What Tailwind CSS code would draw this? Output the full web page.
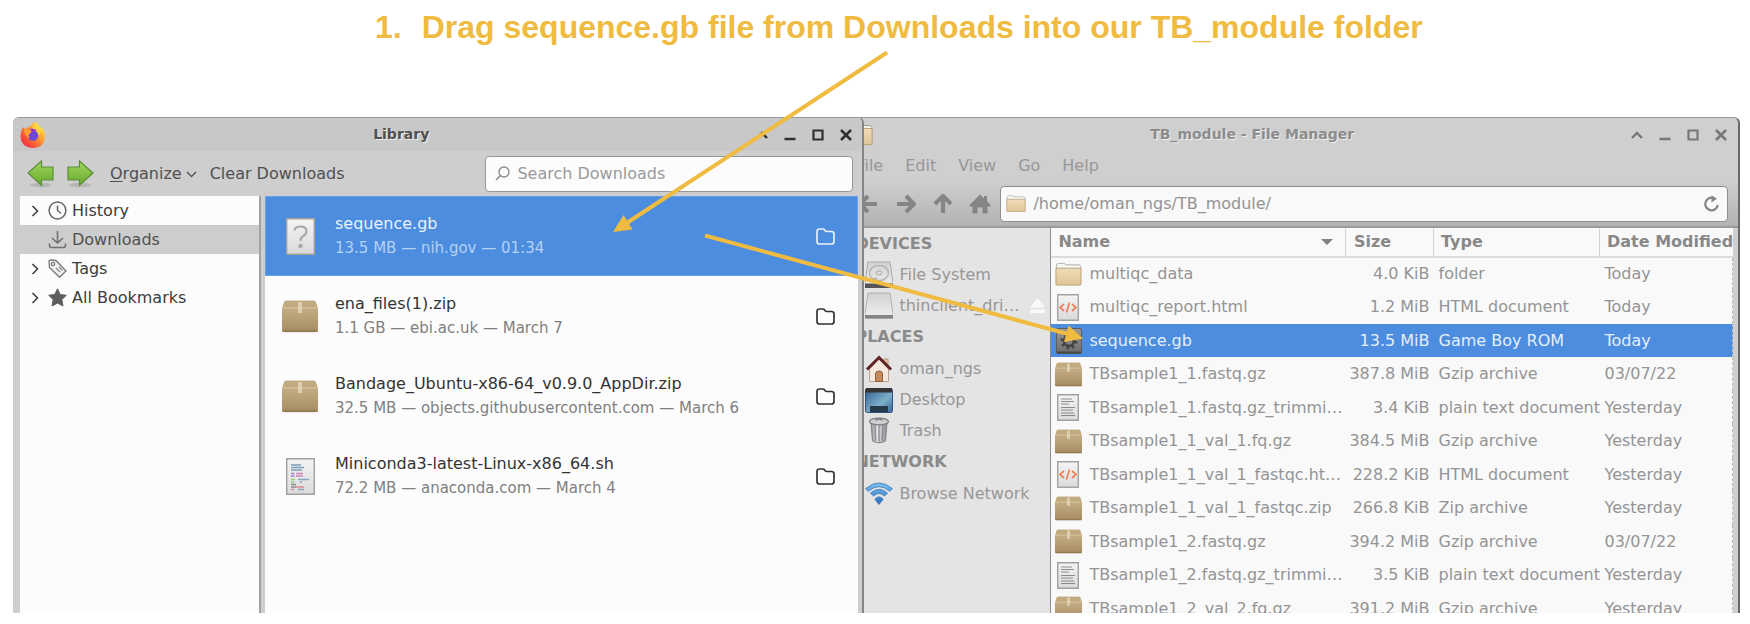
<!DOCTYPE html>
<html lang="en">
<head>
<meta charset="utf-8">
<title>Move sequence.gb into TB_module</title>
<script src="https://cdn.jsdelivr.net/npm/@tailwindcss/browser@4"></script>
</head>
<body class="bg-white">
<svg class="absolute size-0" aria-hidden="true">
  <defs>
    <linearGradient id="gBox" x1="0" y1="0" x2="0" y2="1"><stop offset="0" stop-color="#cdb78f"/><stop offset="1" stop-color="#a68c62"/></linearGradient>
    <linearGradient id="gGreen" x1="0" y1="0" x2="0" y2="1"><stop offset="0" stop-color="#a5d860"/><stop offset="1" stop-color="#62a82c"/></linearGradient>
    <linearGradient id="gPage" x1="0" y1="0" x2="0" y2="1"><stop offset="0" stop-color="#f4f4f4"/><stop offset="1" stop-color="#dadada"/></linearGradient>
    <linearGradient id="gFolder" x1="0" y1="0" x2="0" y2="1"><stop offset="0" stop-color="#efdcb8"/><stop offset="1" stop-color="#dfc595"/></linearGradient>
    <linearGradient id="gFox" x1="1" y1="0" x2="0" y2="1"><stop offset="0" stop-color="#fff04a"/><stop offset=".4" stop-color="#ffa030"/><stop offset=".75" stop-color="#f8483c"/><stop offset="1" stop-color="#e0205c"/></linearGradient>
    <linearGradient id="gDesk" x1="0" y1="0" x2="1" y2="1"><stop offset="0" stop-color="#2f5a92"/><stop offset=".6" stop-color="#7db0c8"/><stop offset="1" stop-color="#34659c"/></linearGradient>
    <linearGradient id="gDrive" x1="0" y1="0" x2="0" y2="1"><stop offset="0" stop-color="#d2d2d2"/><stop offset="1" stop-color="#efefef"/></linearGradient>
    <linearGradient id="gTrash"><stop offset="0" stop-color="#8f8f94"/><stop offset=".4" stop-color="#e6e6ea"/><stop offset="1" stop-color="#8b8b90"/></linearGradient>
    <linearGradient id="gWifi" x1="0" y1="0" x2="0" y2="1"><stop offset="0" stop-color="#7cc3f2"/><stop offset="1" stop-color="#2f6dc0"/></linearGradient>
    <linearGradient id="gRom" x1="0" y1="0" x2="0" y2="1"><stop offset="0" stop-color="#9a9a9a"/><stop offset="1" stop-color="#6c6c6c"/></linearGradient>
  </defs>
  <symbol id="box" viewBox="0 0 36 33">
    <path d="M1 31.500h34v1H1z" fill="#bbb" opacity=".6"/>
    <path d="M4 .5h28q1.500 0 2 1.500l2 7v21q0 2-1.500 2h-33Q0 32 0 30V9l2-7Q2.500.5 4 .5z" fill="url(#gBox)"/>
    <path d="M4 1h28q1 0 1.500 1l2 6.500H.5L2.500 2Q3 1 4 1z" fill="#c2aa80"/>
    <path d="M.5 8h35" stroke="#d9c7a3" stroke-width="1.200"/>
    <path d="M.5 31h35" stroke="#94794f" stroke-width="1.500"/>
    <path d="M16 2h4v11h-4z" fill="#e6d9bd" opacity=".75"/>
  </symbol>
  <symbol id="folder" viewBox="0 0 28 24">
    <path d="M1.500 22V3.500Q1.500 1 4 1h5q1.500 0 2 1.500h13.500q2 0 2 2V22z" fill="#f7f7f5" stroke="#b0aea8"/>
    <path d="M1 6h26v16.500q0 1-1 1H2q-1 0-1-1z" fill="url(#gFolder)" stroke="#b9a27a"/>
  </symbol>
  <symbol id="html" viewBox="0 0 22 27">
    <path d="M.7.700h20.600v25.600H.7z" fill="url(#gPage)" stroke="#a3a3a3" stroke-width="1.400"/>
    <path d="M7 10l-4 3.500L7 17M15 10l4 3.500-4 3.500M12.500 8.500l-3 10" fill="none" stroke="#ee8159" stroke-width="1.700"/>
  </symbol>
  <symbol id="txt" viewBox="0 0 22 27">
    <path d="M.7.700h20.600v25.600H.7z" fill="url(#gPage)" stroke="#a0a0a0" stroke-width="1.400"/>
    <path d="M4 5h11M4 7.500h13M4 10h8M4 13.500h14M4 16h12M4 19h13M4 21.500h14" stroke="#8c8c8c" stroke-width="1.200"/>
  </symbol>
  <symbol id="rom" viewBox="0 0 26 26">
    <rect x=".5" y=".5" width="25" height="25" rx="1.500" fill="url(#gRom)" stroke="#5d5d5d"/>
    <circle cx="13" cy="13" r="5" fill="none" stroke="#474747" stroke-width="3"/>
    <circle cx="13" cy="13" r="7.300" fill="none" stroke="#474747" stroke-width="2.600" stroke-dasharray="2.500 3.230"/>
    <path d="M1 24.500h24" stroke="#484848" stroke-width="2"/>
  </symbol>
  <symbol id="dir" viewBox="0 0 19 17">
    <path d="M3.500 1h3.600q.8 0 1.300.7l.8 1.100q.5.700 1.300.7H15.500Q18 3.500 18 6v7.500Q18 16 15.500 16h-12Q1 16 1 13.500v-10Q1 1 3.500 1z" fill="none" stroke="currentColor" stroke-width="1.700"/>
  </symbol>
  <symbol id="up" viewBox="0 0 12 12"><path d="M1 9l5-5 5 5" fill="none" stroke="currentColor" stroke-width="2.400"/></symbol>
  <symbol id="min" viewBox="0 0 12 12"><path d="M.5 10h11" stroke="currentColor" stroke-width="2.400"/></symbol>
  <symbol id="max" viewBox="0 0 12 12"><path d="M1.500 1.500h9v9h-9z" fill="none" stroke="currentColor" stroke-width="2.200"/></symbol>
  <symbol id="close" viewBox="0 0 12 12"><path d="M1 1l10 10M11 1L1 11" stroke="currentColor" stroke-width="2.600"/></symbol>
  <symbol id="chev" viewBox="0 0 8 12"><path d="M1.500 1l5 5-5 5" fill="none" stroke="currentColor" stroke-width="1.500"/></symbol>
  <symbol id="gArrow" viewBox="0 0 27 28">
    <ellipse cx="14" cy="25" rx="11" ry="2.200" fill="#999" opacity=".45"/>
    <path d="M1 13L14.500 1v6h11.500v13H14.500v5.500z" fill="url(#gGreen)" stroke="#5a8f3a" stroke-width="1.200"/>
  </symbol>
  <symbol id="navArrow" viewBox="0 0 20 20"><path d="M1 10h17M10 2l8 8-8 8" fill="none" stroke="currentColor" stroke-width="4.200"/></symbol>
</svg>

<main class="relative flex h-screen flex-col overflow-hidden font-['DejaVu_Sans',sans-serif] text-base">
  <h1 class="flex h-[117px] shrink-0 gap-5 pt-[7px] pl-[375px] text-[32px] leading-10 font-bold whitespace-nowrap text-[#efbb40] font-['Liberation_Sans',Arial,sans-serif]">
    <span>1.</span><span>Drag sequence.gb file from Downloads into our TB_module folder</span>
  </h1>

  <div class="mr-[10px] mb-[11px] ml-[13px] flex min-h-0 flex-1">
    <!-- Library window -->
    <section aria-label="Library" class="z-10 flex w-[49.3%] shrink-0 flex-col overflow-hidden rounded-t-md border-t border-r-2 border-t-[#999] border-r-[#858585] bg-[#cecece] text-[#505050]">
      <header class="flex h-[33px] shrink-0 items-center bg-[#c8c8c8] pr-[10px] pl-[7px]">
        <svg class="size-[26px]" viewBox="0 0 26 26" aria-hidden="true">
          <path d="M3 5l2 2q2-2 5-2.500Q12 2 15 0q1.500 3 4 4.500 6.500 4 6 10Q24.500 25.500 13 26 1 25.500.5 14 .5 9 3 5z" fill="url(#gFox)"/>
          <path d="M16 0q2 3 5 5 4 4 4 9-1-4-4-5-1 6-8 6-4-1-4-4z" fill="#ffdc3f" opacity=".8"/>
          <circle cx="13" cy="13.500" r="5.200" fill="#6b48d8"/>
          <path d="M9 7q4-1.500 8 1-2 0-2.500 2-4-1-5 4Q7 11 9 7z" fill="#9a35c8"/>
          <path d="M4 8q3-2 7 0 1 3-2 4-1 2 1 4-5-1-6-8z" fill="#ff9e2f"/>
        </svg>
        <h2 class="flex-1 text-center text-[14px] font-bold [text-shadow:1px_1px_0_#eee]">Library</h2>
        <div class="flex gap-4 text-[#303030]">
          <button aria-label="Shade"><svg class="size-3"><use href="#up"/></svg></button>
          <button aria-label="Minimize"><svg class="size-3"><use href="#min"/></svg></button>
          <button aria-label="Maximize"><svg class="size-3"><use href="#max"/></svg></button>
          <button aria-label="Close"><svg class="size-3"><use href="#close"/></svg></button>
        </div>
      </header>

      <div class="flex h-[45px] shrink-0 items-center pr-[9px] pl-[14px]">
        <button aria-label="Back"><svg class="h-7 w-[27px]"><use href="#gArrow"/></svg></button>
        <button aria-label="Forward" class="ml-[13px]"><svg class="h-7 w-[27px] -scale-x-100"><use href="#gArrow"/></svg></button>
        <button class="ml-4 flex items-center gap-1"><span><u class="underline-offset-2">O</u>rganize</span>
          <svg class="h-2 w-[11px]" viewBox="0 0 11 8"><path d="M1 2l4.500 4.500L10 2" fill="none" stroke="currentColor" stroke-width="1.300"/></svg></button>
        <button class="ml-[13px]">Clear Downloads</button>
        <label class="ml-auto flex h-[36px] w-[368px] items-center gap-[7px] rounded border border-[#969696] bg-[#fcfcfc] pl-[9px]">
          <svg class="size-[15px]" viewBox="0 0 15 15" aria-hidden="true"><circle cx="9" cy="6" r="5" fill="none" stroke="#8d8d8d" stroke-width="1.400"/><path d="M5.500 9.500L1 14" stroke="#8d8d8d" stroke-width="1.600"/></svg>
          <input type="search" aria-label="Search Downloads" placeholder="Search Downloads" class="min-w-0 flex-1 bg-transparent outline-none placeholder:text-[#999]">
        </label>
      </div>

      <div class="flex min-h-0 flex-1 pr-[4px] pl-[7px]">
        <nav aria-label="Library folders" class="w-[241px] shrink-0 border-r-2 border-[#a2a2a2] bg-[#fcfcfc] text-[#3c3c3c]">
          <button class="flex h-[29px] w-full items-center pl-[11px]">
            <svg class="mr-[9px] h-3 w-2"><use href="#chev"/></svg>
            <svg class="mr-[5px] size-[19px]" viewBox="0 0 19 19"><circle cx="9.500" cy="9.500" r="8.400" fill="none" stroke="#666" stroke-width="1.500"/><path d="M9.500 4.500v5l3.500 3" fill="none" stroke="#666" stroke-width="1.500"/></svg>History</button>
          <button class="flex h-[29px] w-full items-center bg-[#cdcdcd] pl-[28px] text-[#505050]">
            <svg class="mr-[5px] size-[19px]" viewBox="0 0 19 19"><path d="M9.500 1v11.500M4 8l5.500 5L15 8M1.500 13.500v2q0 2 2 2h12q2 0 2-2v-2" fill="none" stroke="#707070" stroke-width="1.600"/></svg>Downloads</button>
          <button class="flex h-[29px] w-full items-center pl-[11px]">
            <svg class="mr-[9px] h-3 w-2"><use href="#chev"/></svg>
            <svg class="mr-[5px] size-[19px]" viewBox="0 0 19 19"><path d="M1 2.500Q1 1 2.500 1L8 1.500 18 12l-6.500 6.300L1.500 8.500z" fill="#efefef" stroke="#777" stroke-width="1.300"/><circle cx="5" cy="5" r="1.700" fill="none" stroke="#777" stroke-width="1.200"/><path d="M8 9l4 4M11 8l3.500 3.500" stroke="#888" stroke-width="1.200"/></svg>Tags</button>
          <button class="flex h-[29px] w-full items-center pl-[11px]">
            <svg class="mr-[9px] h-3 w-2"><use href="#chev"/></svg>
            <svg class="mr-[5px] size-[19px]" viewBox="0 0 19 19"><path d="M9.500.8l2.700 5.700 6.100.8-4.500 4.300 1.200 6.400-5.500-3-5.500 3 1.200-6.400L.7 7.300l6.100-.8z" fill="#5e5e5e" stroke="#5e5e5e"/></svg>All Bookmarks</button>
        </nav>

        <ul class="ml-1 flex-1 bg-[#fcfcfc] text-[#333]">
          <li class="flex h-20 items-center border border-dotted border-[#86b0e6] bg-[#4c8de0] pr-[22px] pl-4 text-[#e9f1fb]">
            <span class="flex w-[36px] justify-center"><svg class="h-[37px] w-[29px]" viewBox="0 0 29 37"><path d="M.7.700h27.600v35.600H.7z" fill="url(#gPage)" stroke="#a9a295" stroke-width="1.400"/><path d="M8.500 12.500Q9 8.500 14.500 8.500q6 0 6 4.700 0 3-3.500 5-2.500 1.500-2.500 4.800" fill="none" stroke="#aaa" stroke-width="2.200"/><circle cx="14.500" cy="28" r="2.200" fill="#aaa"/></svg></span>
            <div class="ml-[17px] flex-1 leading-6"><p>sequence.gb</p><p class="text-[15px] text-[#b5d1f4]">13.5 MB — nih.gov — 01:34</p></div>
            <button aria-label="Show sequence.gb in folder"><svg class="h-[17px] w-[19px]"><use href="#dir"/></svg></button>
          </li>
          <li class="flex h-20 items-center pr-[23px] pl-[17px]">
            <svg class="h-[33px] w-[36px]"><use href="#box"/></svg>
            <div class="ml-[17px] flex-1 leading-6"><p>ena_files(1).zip</p><p class="text-[15px] text-[#808080]">1.1 GB — ebi.ac.uk — March 7</p></div>
            <button aria-label="Show ena_files(1).zip in folder"><svg class="h-[17px] w-[19px]"><use href="#dir"/></svg></button>
          </li>
          <li class="flex h-20 items-center pr-[23px] pl-[17px]">
            <svg class="h-[33px] w-[36px]"><use href="#box"/></svg>
            <div class="ml-[17px] flex-1 leading-6"><p>Bandage_Ubuntu-x86-64_v0.9.0_AppDir.zip</p><p class="text-[15px] text-[#808080]">32.5 MB — objects.githubusercontent.com — March 6</p></div>
            <button aria-label="Show Bandage in folder"><svg class="h-[17px] w-[19px]"><use href="#dir"/></svg></button>
          </li>
          <li class="flex h-20 items-center pr-[23px] pl-[17px]">
            <span class="flex w-[36px] justify-center"><svg class="h-[37px] w-[29px]" viewBox="0 0 29 37"><path d="M.7.700h27.600v35.600H.7z" fill="url(#gPage)" stroke="#a0a0a0" stroke-width="1.400"/><path d="M5 7h10M5 9.500h13M5 12h11" stroke="#7d9fb8" stroke-width="1.300"/><path d="M5 15.500h3.500M5 18h3.500" stroke="#a583cf" stroke-width="1.500"/><path d="M10 15.500h7M10 18h7" stroke="#cc86b4" stroke-width="1.500"/><path d="M5 21.500h4M5 24h3" stroke="#93cc80" stroke-width="1.500"/><path d="M12 21.500h11M14 24h2M12 31.500h6" stroke="#88a4bf" stroke-width="1.300"/><path d="M5 26.500h5M5 29h5" stroke="#8c8c8c" stroke-width="1.500"/><path d="M10 29h8M5 31.500h3" stroke="#d68c93" stroke-width="1.400"/></svg></span>
            <div class="ml-[17px] flex-1 leading-6"><p>Miniconda3-latest-Linux-x86_64.sh</p><p class="text-[15px] text-[#808080]">72.2 MB — anaconda.com — March 4</p></div>
            <button aria-label="Show Miniconda3 in folder"><svg class="h-[17px] w-[19px]"><use href="#dir"/></svg></button>
          </li>
        </ul>
      </div>
    </section>

    <!-- File manager window, partly behind the library -->
    <section aria-label="TB_module - File Manager" class="-ml-4 flex min-w-0 flex-1 flex-col overflow-hidden rounded-t-md border-t border-r-2 border-t-[#999] border-r-[#6a6a6a] bg-[#cfcfcf] text-[#8c8c8c]">
      <header class="flex h-[33px] shrink-0 items-center pr-[11px] pl-[7px]">
        <svg class="h-5 w-[18px]" viewBox="0 0 18 20" aria-hidden="true"><path d="M0 .5h14q3 0 3 2V19H0z" fill="#f0efec" stroke="#a8a49a"/><path d="M0 3.500h17V19.500H0z" fill="url(#gFolder)" stroke="#bfa677"/></svg>
        <h2 class="flex-1 text-center text-[14px] font-bold [text-shadow:1px_1px_0_#eee]">TB_module - File Manager</h2>
        <div class="flex gap-4 text-[#777]">
          <button aria-label="Shade"><svg class="size-3"><use href="#up"/></svg></button>
          <button aria-label="Minimize"><svg class="size-3"><use href="#min"/></svg></button>
          <button aria-label="Maximize"><svg class="size-3"><use href="#max"/></svg></button>
          <button aria-label="Close"><svg class="size-3"><use href="#close"/></svg></button>
        </div>
      </header>
      <nav aria-label="Menu bar" class="flex h-[30px] shrink-0 items-center gap-[22px] pl-2 text-[#979797]">
        <button>File</button><button>Edit</button><button>View</button><button>Go</button><button>Help</button>
      </nav>
      <div class="flex h-[47px] shrink-0 items-center border-b-2 border-[#9a9a9a] bg-linear-to-b from-[#cfcfcf] to-[#b2b2b2] pr-2.5 pl-[10px] text-[#858585]">
        <button aria-label="Back"><svg class="size-5 -scale-x-100"><use href="#navArrow"/></svg></button>
        <button aria-label="Forward" class="ml-[18px]"><svg class="size-5"><use href="#navArrow"/></svg></button>
        <button aria-label="Up" class="ml-[17px]"><svg class="size-5 -rotate-90"><use href="#navArrow"/></svg></button>
        <button aria-label="Home" class="ml-4"><svg class="size-[22px]" viewBox="0 0 22 22"><path d="M11 1.500l4 4V3h3v5.300l3.500 3.700v1.500H18.500V20.500h-5v-6h-5v6h-5v-7H.5V12z" fill="currentColor"/></svg></button>
        <label class="ml-[9px] flex h-[36px] flex-1 items-center gap-[7px] rounded border border-[#8e8e8e] bg-[#f9f9f9] pr-[7px] pl-[5px]">
          <svg class="h-[17px] w-5" aria-hidden="true"><use href="#folder"/></svg>
          <input type="text" aria-label="Location" value="/home/oman_ngs/TB_module/" class="min-w-0 flex-1 bg-transparent text-[#929292] outline-none">
          <button aria-label="Reload"><svg class="size-[17px]" viewBox="0 0 17 17"><path d="M11 3.200A6.300 6.300 0 1 0 14.800 10" fill="none" stroke="currentColor" stroke-width="2.200"/><path d="M8.500.3L14 3.800 8.500 7.500z" fill="currentColor"/></svg></button>
        </label>
      </div>

      <div class="flex min-h-0 flex-1 pr-[5px]">
        <nav aria-label="Side pane" class="flex w-[203px] shrink-0 flex-col border-r border-[#8e8e8e] bg-[#e4e4e4] text-[#979797]">
          <h3 class="flex h-[31px] items-center pl-[7px] font-bold text-[#8a8a8a]">DEVICES</h3>
          <a href="#" class="flex h-[31px] items-center gap-1.5 pl-[17px]">
            <svg class="h-7 w-[28px]" viewBox="0 0 28 28"><path d="M3 1h22l3 21v4H0v-4z" fill="url(#gDrive)" stroke="#a8a8a8"/><ellipse cx="14" cy="12" rx="9.500" ry="7.500" fill="none" stroke="#b5b5b5" stroke-width="1.500"/><ellipse cx="14" cy="12" rx="3" ry="2" fill="none" stroke="#aaa"/><path d="M6 20l6-3" stroke="#aaa" stroke-width="1.500"/><path d="M0 22.500h28V27H0z" fill="#555"/></svg>File System</a>
          <a href="#" class="flex h-[31px] items-center gap-1.5 pr-[5px] pl-[17px]">
            <svg class="h-7 w-[28px]" viewBox="0 0 28 28"><path d="M3 1h22l3 21v4H0v-4z" fill="url(#gDrive)" stroke="#b0b0b0"/><path d="M0 23h28v3.500H0z" fill="#858585"/></svg><span class="flex-1">thinclient_dri…</span>
            <svg class="h-[15px] w-[15px]" viewBox="0 0 15 15"><path d="M7.500 0L15 9.500H0zM0 11.500h15V15H0z" fill="#fafafa"/></svg></a>
          <h3 class="flex h-8 items-center pl-[7px] font-bold text-[#8a8a8a]">PLACES</h3>
          <a href="#" class="flex h-[31px] items-center gap-1.5 pl-[17px]">
            <svg class="h-7 w-[28px]" viewBox="0 0 28 28"><path d="M19 4h4v9h-4z" fill="#e8c6a6" stroke="#b99572"/><path d="M4.500 14L14 4l9.500 10v12.500h-19z" fill="#f5e7dc" stroke="#baa595"/><path d="M10.500 26.500V19q0-3 3.500-3t3.500 3v7.500z" fill="#c48a5e" stroke="#8f5d38"/><path d="M2 14.500L14 2.500l12 12" fill="none" stroke="#5d2326" stroke-width="3"/></svg>oman_ngs</a>
          <a href="#" class="flex h-[31px] items-center gap-1.5 pl-[17px]">
            <svg class="h-[26px] w-[28px]" viewBox="0 0 28 26"><rect x=".5" y="1.500" width="27" height="24" rx="2" fill="url(#gDesk)" stroke="#2f4f7c"/><path d="M1 1h26v4.500H0z" fill="#343434"/><path d="M5 19h18v6H5z" fill="#29394c"/></svg>Desktop</a>
          <a href="#" class="flex h-[31px] items-center gap-1.5 pl-[17px]">
            <svg class="h-[27px] w-[28px]" viewBox="0 0 28 27"><path d="M6 5h16l-1.500 19q-6.500 3.500-13 0z" fill="url(#gTrash)" stroke="#808085"/><path d="M10 8l.7 16M14 8v17M18 8l-.7 16" stroke="#8b8b90" stroke-width="1.300"/><ellipse cx="14" cy="4.500" rx="9.500" ry="3.300" fill="#cfcfd2" stroke="#7d7d82" stroke-width="1.300"/><path d="M10.500 3.500q3.500-3 7 0" fill="none" stroke="#77777b" stroke-width="1.300"/></svg>Trash</a>
          <h3 class="flex h-8 items-center pl-[7px] font-bold text-[#8a8a8a]">NETWORK</h3>
          <a href="#" class="flex h-[31px] items-center gap-1.5 pl-[17px]">
            <svg class="h-[23px] w-[28px]" viewBox="0 0 28 23"><path d="M.5 6.800Q14-5 27.500 6.800L24.500 9.300Q14 0 3.500 9.300zM5.500 11.200Q14 3.500 22.500 11.200L19.500 14Q14 9 8.500 14zM9.800 17.200Q14 12.500 18.200 17.200L14 22.500z" fill="url(#gWifi)" stroke="#3b78b8" stroke-width=".8"/></svg>Browse Network</a>
        </nav>

        <div class="min-w-0 flex-1 overflow-hidden bg-[#f9f9f9]">
          <table class="w-full table-fixed border-collapse whitespace-nowrap text-[#949494]">
            <thead>
              <tr class="h-[29px] border-b-2 border-[#dcdcdc] text-left text-[#888]">
                <th class="border-r border-[#d4d4d4] pr-3 pl-[7px]"><button class="flex w-full items-center justify-between">Name <svg class="h-1.5 w-3" viewBox="0 0 12 6"><path d="M0 0h12L6 6z" fill="#808080"/></svg></button></th>
                <th class="w-[88px] border-r border-[#d4d4d4] pl-2">Size</th>
                <th class="w-[166px] border-r border-[#d4d4d4] pl-[7px]">Type</th>
                <th class="w-[133px] pl-[7px]">Date Modified</th>
              </tr>
            </thead>
            <tbody class="border-r border-dashed border-[#bbb] [&_td]:p-0 [&_td:nth-child(2)]:pr-1 [&_td:nth-child(2)]:text-right [&_td:nth-child(3)]:pl-[5px] [&_td:nth-child(4)]:pl-[5px]">
              <tr class="h-[33px]"><td><div class="flex items-center gap-[7px] pl-1"><svg class="h-6 w-[27px]"><use href="#folder"/></svg>multiqc_data</div></td><td>4.0 KiB</td><td>folder</td><td>Today</td></tr>
              <tr class="h-[34px]"><td><div class="flex items-center gap-[10px] pl-[6px]"><svg class="h-[27px] w-[22px]"><use href="#html"/></svg>multiqc_report.html</div></td><td>1.2 MiB</td><td>HTML document</td><td>Today</td></tr>
              <tr class="h-[33px] bg-[#4c8de0] text-[#e4eefb]"><td><div class="flex items-center gap-[7px] pl-[5px]"><svg class="size-[26px]"><use href="#rom"/></svg>sequence.gb</div></td><td>13.5 MiB</td><td>Game Boy ROM</td><td>Today</td></tr>
              <tr class="h-[34px]"><td><div class="flex items-center gap-[7px] pl-1"><svg class="h-[25px] w-[27px]"><use href="#box"/></svg>TBsample1_1.fastq.gz</div></td><td>387.8 MiB</td><td>Gzip archive</td><td>03/07/22</td></tr>
              <tr class="h-[33px]"><td><div class="flex items-center gap-[10px] pl-[6px]"><svg class="h-[27px] w-[22px]"><use href="#txt"/></svg>TBsample1_1.fastq.gz_trimmi…</div></td><td>3.4 KiB</td><td>plain text document</td><td>Yesterday</td></tr>
              <tr class="h-[34px]"><td><div class="flex items-center gap-[7px] pl-1"><svg class="h-[25px] w-[27px]"><use href="#box"/></svg>TBsample1_1_val_1.fq.gz</div></td><td>384.5 MiB</td><td>Gzip archive</td><td>Yesterday</td></tr>
              <tr class="h-[33px]"><td><div class="flex items-center gap-[10px] pl-[6px]"><svg class="h-[27px] w-[22px]"><use href="#html"/></svg>TBsample1_1_val_1_fastqc.ht…</div></td><td>228.2 KiB</td><td>HTML document</td><td>Yesterday</td></tr>
              <tr class="h-[34px]"><td><div class="flex items-center gap-[7px] pl-1"><svg class="h-[25px] w-[27px]"><use href="#box"/></svg>TBsample1_1_val_1_fastqc.zip</div></td><td>266.8 KiB</td><td>Zip archive</td><td>Yesterday</td></tr>
              <tr class="h-[33px]"><td><div class="flex items-center gap-[7px] pl-1"><svg class="h-[25px] w-[27px]"><use href="#box"/></svg>TBsample1_2.fastq.gz</div></td><td>394.2 MiB</td><td>Gzip archive</td><td>03/07/22</td></tr>
              <tr class="h-[34px]"><td><div class="flex items-center gap-[10px] pl-[6px]"><svg class="h-[27px] w-[22px]"><use href="#txt"/></svg>TBsample1_2.fastq.gz_trimmi…</div></td><td>3.5 KiB</td><td>plain text document</td><td>Yesterday</td></tr>
              <tr class="h-[33px]"><td><div class="flex items-center gap-[7px] pl-1"><svg class="h-[25px] w-[27px]"><use href="#box"/></svg>TBsample1_2_val_2.fq.gz</div></td><td>391.2 MiB</td><td>Gzip archive</td><td>Yesterday</td></tr>
            </tbody>
          </table>
        </div>
      </div>
    </section>
  </div>

  <!-- Annotation arrows -->
  <svg class="pointer-events-none absolute top-0 left-0 z-20 h-[624px] w-[1750px]" viewBox="0 0 1750 624" aria-hidden="true">
    <path d="M887 52.500L626 223.500M705 235.500L1068 334" stroke="#efbb40" stroke-width="4" fill="none"/>
    <path d="M613 232l10.500-17 9 14.500zM1083 338.500l-14.500-13-4.500 16.500z" fill="#efbb40"/>
  </svg>
</main>
</body>
</html>
